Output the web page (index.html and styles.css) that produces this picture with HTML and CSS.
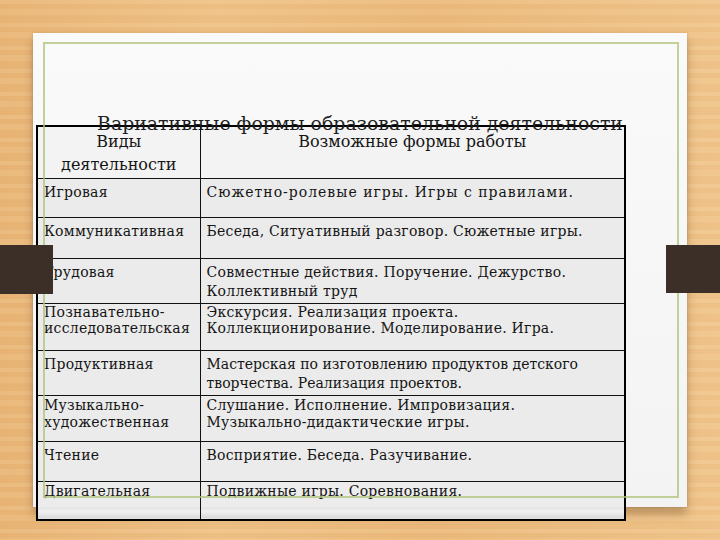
FILE: index.html
```html
<!DOCTYPE html>
<html lang="ru">
<head>
<meta charset="utf-8">
<title>Вариативные формы образовательной деятельности</title>
<link rel="stylesheet" href="styles.css">
</head>
<body>
<div class="tab tab-left"></div>
<div class="tab tab-right"></div>
<main class="card">
  <h1 class="title">Вариативные формы образовательной деятельности</h1>
  <table class="forms">
    <colgroup><col class="c1"><col class="c2"></colgroup>
    <tr class="head h-52">
      <th>Виды<br>деятельности</th>
      <th>Возможные формы работы</th>
    </tr>
    <tr class="h-39"><td>Игровая</td><td class="wide">Сюжетно-ролевые игры. Игры с правилами.</td></tr>
    <tr class="h-41"><td>Коммуникативная</td><td>Беседа, Ситуативный разговор. Сюжетные игры.</td></tr>
    <tr class="h-45"><td>Трудовая</td><td>Совместные действия. Поручение. Дежурство.<br>Коллективный труд</td></tr>
    <tr class="h-47 tight"><td>Познавательно-<br>исследовательская</td><td>Экскурсия. Реализация проекта.<br>Коллекционирование. Моделирование. Игра.</td></tr>
    <tr class="h-45"><td>Продуктивная</td><td class="narrow">Мастерская по изготовлению продуктов детского<br>творчества. Реализация проектов.</td></tr>
    <tr class="h-46 mid"><td>Музыкально-<br>художественная</td><td>Слушание. Исполнение. Импровизация.<br>Музыкально-дидактические игры.</td></tr>
    <tr class="h-40"><td>Чтение</td><td>Восприятие. Беседа. Разучивание.</td></tr>
    <tr class="h-39 low"><td>Двигательная</td><td>Подвижные игры. Соревнования.</td></tr>
  </table>
</main>
</body>
</html>
```
FILE: styles.css
```css
html, body {
  margin: 0;
  padding: 0;
}
body {
  width: 720px;
  height: 540px;
  overflow: hidden;
  position: relative;
  padding: 33px 0 0 33px;
  box-sizing: border-box;
  background-color: #ebbb7e;
  background-image:
    repeating-linear-gradient(180deg, rgba(255,235,200,0.10) 0 4px, rgba(205,145,75,0.07) 4px 9px, rgba(255,230,190,0.08) 9px 15px, rgba(195,135,65,0.06) 15px 23px),
    linear-gradient(90deg, #e9b678 0%, #efc287 30%, #ebba7c 60%, #f0c58c 100%);
  font-family: "DejaVu Serif", "Liberation Serif", serif;
  color: #151515;
}
.tab {
  position: absolute;
  top: 245px;
  height: 49px;
  background: #3b2f28;
  z-index: 5;
}
.tab-left {
  left: 0;
  width: 53px;
}
.tab-right {
  left: 666px;
  width: 54px;
  height: 48px;
}
.card {
  position: relative;
  width: 654px;
  height: 474px;
  box-sizing: border-box;
  padding: 79px 0 0 3px;
  background: linear-gradient(180deg, #fafafa 0%, #f3f3f3 100%);
  box-shadow: 0 7px 9px rgba(90, 55, 20, 0.35), 0 0 2px rgba(120, 80, 40, 0.3);
}
.card::after {
  content: "";
  position: absolute;
  left: 10px;
  top: 9px;
  right: 8px;
  bottom: 9px;
  border: 2px solid rgba(175, 195, 120, 0.75);
  pointer-events: none;
  z-index: 3;
}
.title {
  position: relative;
  z-index: 2;
  margin: 0 0 -9px -3px;
  padding: 0;
  width: 654px;
  text-align: center;
  font-weight: normal;
  font-size: 18.9px;
  line-height: 22px;
  color: #1e1e1e;
}
.forms {
  position: relative;
  z-index: 1;
  width: 588px;
  border-collapse: collapse;
  table-layout: fixed;
  border: 2px solid #000;
  background: #ebebeb;
  font-size: 14px;
}
.c1 { width: 163px; }
.c2 { width: 425px; }
.forms th, .forms td {
  border: 1px solid #111;
  vertical-align: top;
  text-align: left;
  padding: 4px 6px 0 6px;
  line-height: 19px;
  font-weight: normal;
  letter-spacing: 0.25px;
  white-space: nowrap;
  overflow: visible;
}
.forms td.wide {
  letter-spacing: 1px;
}
.forms td.narrow {
  letter-spacing: 0;
}
.forms .head th {
  background: #f3f3f3;
  font-size: 16px;
  line-height: 23px;
  padding-top: 3px;
  text-align: center;
  letter-spacing: 0;
}
.forms .tight td {
  padding-top: 0;
  line-height: 16px;
}
.forms .mid td {
  padding-top: 1px;
  line-height: 17px;
}
.forms .low td {
  padding-top: 0;
  background: linear-gradient(180deg, #ececec 0%, #ececec 70%, #e2e2e2 72%, #f2f2f2 80%, #d8d8d8 100%);
}
.h-52 { height: 52px; }
.h-39 { height: 39px; }
.h-41 { height: 41px; }
.h-45 { height: 45px; }
.h-47 { height: 47px; }
.h-46 { height: 46px; }
.h-40 { height: 40px; }
```
